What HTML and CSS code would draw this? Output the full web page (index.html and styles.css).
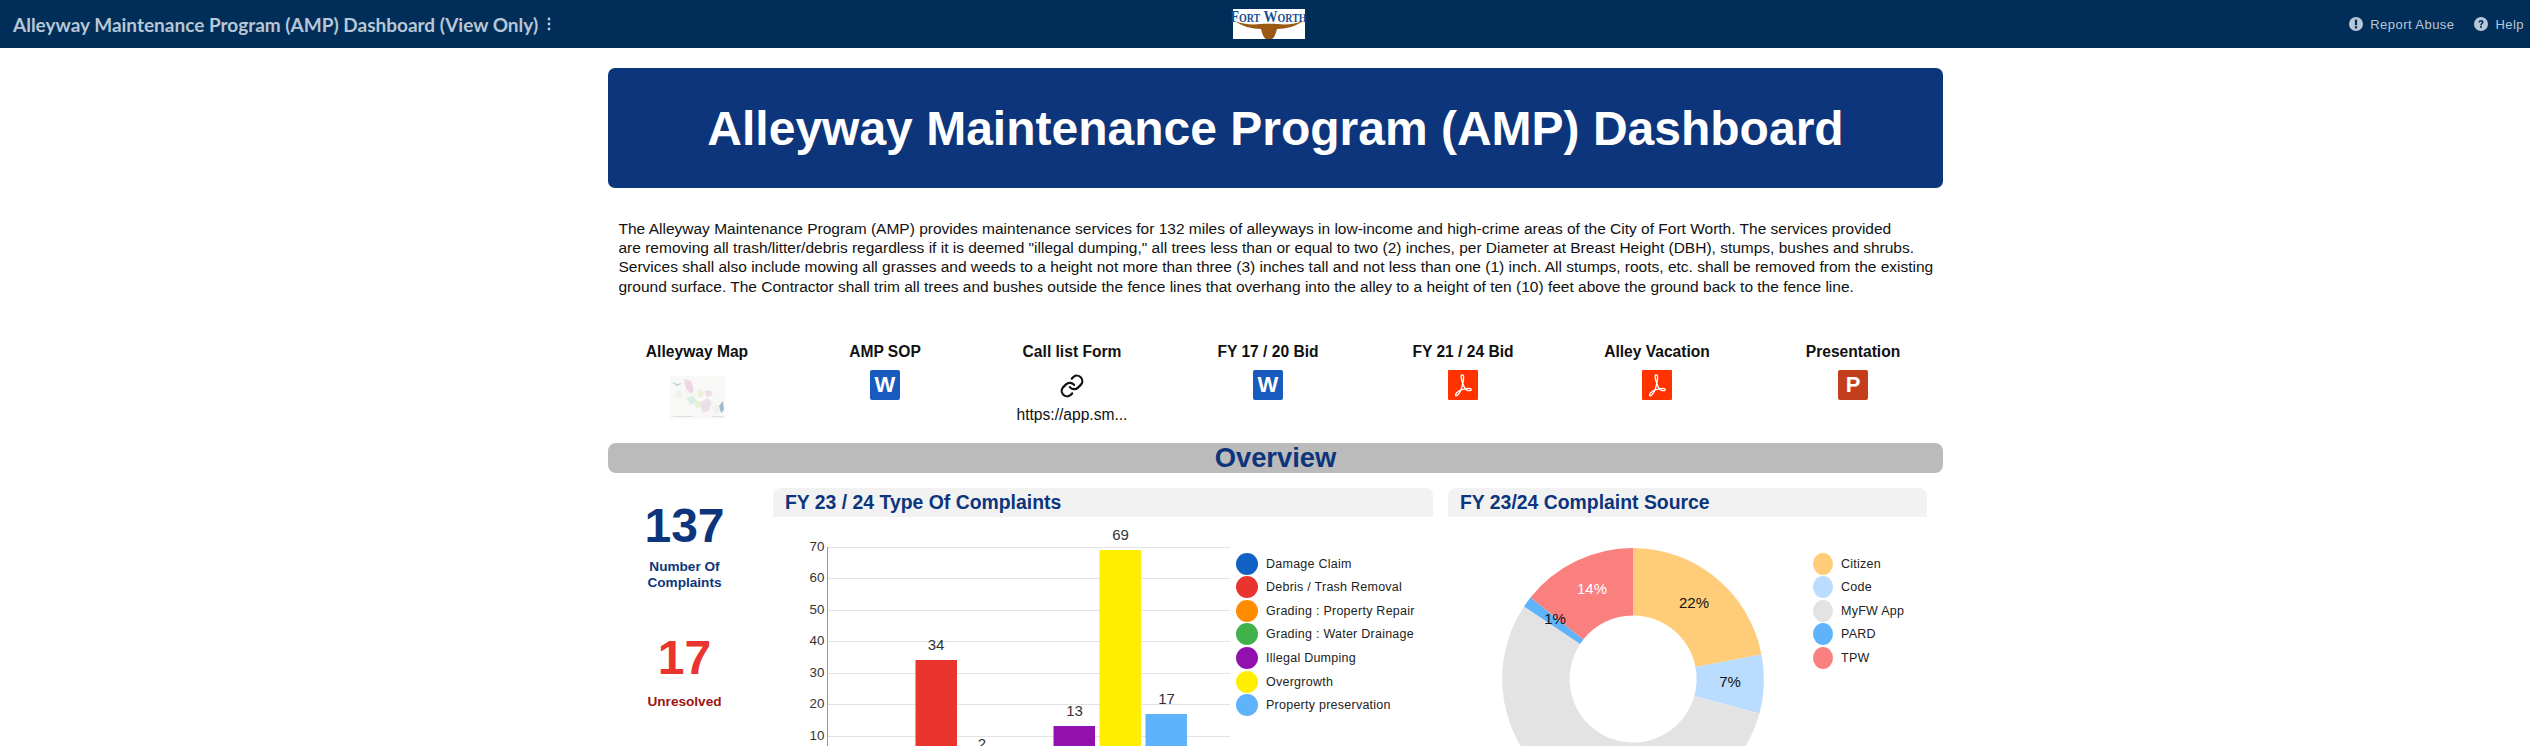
FILE: index.html
```html
<!DOCTYPE html>
<html lang="en">
<head>
<meta charset="utf-8">
<title>Alleyway Maintenance Program (AMP) Dashboard</title>
<link rel="stylesheet" href="styles.css">
</head>
<body>
<header class="topbar">
  <div class="topbar-title"><span>Alleyway Maintenance Program (AMP) Dashboard (View Only)</span>
    <svg class="kebab" width="4" height="14" viewBox="0 0 4 14"><circle cx="2" cy="2" r="1.4"/><circle cx="2" cy="7" r="1.4"/><circle cx="2" cy="12" r="1.4"/></svg>
  </div>
  <div class="logo">
    <span class="logo-text">Fort Worth</span>
    <svg class="logo-horns" width="70" height="18" viewBox="0 0 70 18"><path d="M1 0C8 3 18 4 26 3C29 2.500 41 2.500 44 3C52 4 62 3 69 0C63 5 52 8 43 8C42 12 40 18 37.500 18H32.500C30 18 28 12 27 8C18 8 7 5 1 0Z"/></svg>
  </div>
  <nav class="topbar-links">
    <span class="toplink"><svg width="14" height="14" viewBox="0 0 14 14"><circle cx="7" cy="7" r="7" class="ico-bg"/><rect x="5.900" y="2.600" width="2.200" height="5.600" class="ico-fg"/><rect x="5.900" y="9.200" width="2.200" height="2.200" class="ico-fg"/></svg>Report Abuse</span>
    <span class="toplink"><svg width="14" height="14" viewBox="0 0 14 14"><circle cx="7" cy="7" r="7" class="ico-bg"/><path d="M4.600 5.400C4.700 3.900 5.800 3.100 7.100 3.100C8.500 3.100 9.500 4 9.500 5.200C9.500 6.800 7.700 6.900 7.700 8.400H6.200C6.200 6.400 7.900 6.200 7.900 5.300C7.900 4.800 7.600 4.500 7 4.500C6.500 4.500 6.100 4.900 6.100 5.400Z" class="ico-fg"/><rect x="6.100" y="9.200" width="1.700" height="1.800" class="ico-fg"/></svg>Help</span>
  </nav>
</header>

<main class="page">
  <h1 class="banner">Alleyway Maintenance Program (AMP) Dashboard</h1>

  <p class="intro">The Alleyway Maintenance Program (AMP) provides maintenance services for 132 miles of alleyways in low-income and high-crime areas of the City of Fort Worth. The services provided<br>are removing all trash/litter/debris regardless if it is deemed "illegal dumping," all trees less than or equal to two (2) inches, per Diameter at Breast Height (DBH), stumps, bushes and shrubs.<br>Services shall also include mowing all grasses and weeds to a height not more than three (3) inches tall and not less than one (1) inch. All stumps, roots, etc. shall be removed from the existing<br>ground surface. The Contractor shall trim all trees and bushes outside the fence lines that overhang into the alley to a height of ten (10) feet above the ground back to the fence line.</p>

  <section class="links">
    <div class="link-item">
      <div class="link-label">Alleyway Map</div>
      <svg class="thumb" width="55" height="43" viewBox="0 0 55 43">
        <rect width="55" height="43" fill="#f8f8f6"/>
        <path d="M14 3l7 2 3 9-3 4-5-5z" fill="#eed6e6"/>
        <path d="M30 27l7-5 5 4-3 9-7 1z" fill="#ecdfea"/>
        <path d="M34 15l6-1 3 5-6 2z" fill="#f0dde4"/>
        <path d="M16 22l7-2 4 5-6 4z" fill="#d8efe8"/>
        <path d="M29 13l5 3-2 6-5-2z" fill="#ecf0d8"/>
        <path d="M24 26l6-1 1 6-5 1z" fill="#e6f2d8"/>
        <path d="M6 14l6 2-1 7-6-1z" fill="#f1f1ec"/>
        <path d="M42 31l6-3 2 7-5 3z" fill="#f0f0ec"/>
        <path d="M49 30l4-5 1 9-3 3z" fill="#a3bccb"/>
        <path d="M1 6l7 2 5-1-6 3z" fill="#c0ced6"/>
        <rect x="3" y="40" width="20" height="1" fill="#dedede"/>
        <rect x="42" y="40" width="11" height="1" fill="#dedede"/>
      </svg>
    </div>
    <div class="link-item">
      <div class="link-label">AMP SOP</div>
      <span class="file file-word">W</span>
    </div>
    <div class="link-item">
      <div class="link-label">Call list Form</div>
      <svg class="chain" width="26" height="26" viewBox="0 0 24 24" fill="none" stroke="#111" stroke-width="2" stroke-linecap="round" stroke-linejoin="round"><path d="M10 13a5 5 0 0 0 7.500.5l3-3a5 5 0 0 0-7-7l-1.700 1.700"/><path d="M14 11a5 5 0 0 0-7.500-.5l-3 3a5 5 0 0 0 7 7l1.700-1.700"/></svg>
      <div class="link-url">https://app.sm...</div>
    </div>
    <div class="link-item">
      <div class="link-label">FY 17 / 20 Bid</div>
      <span class="file file-word">W</span>
    </div>
    <div class="link-item">
      <div class="link-label">FY 21 / 24 Bid</div>
      <span class="file file-pdf"><svg width="30" height="30" viewBox="0 0 30 30" fill="none" stroke="#fff" stroke-width="1.300"><path d="M14 5C12.500 5 13 9 15 14C16 17 18 20 20 20.500C22.500 21 24 20 23 19C22 18 17 18.500 13 20C10 21 7 24 7.500 25.500C8 26.500 10.500 25 12.500 21C14 18 16 9 15.500 6C15.300 5.300 14.800 5 14 5Z"/></svg></span>
    </div>
    <div class="link-item">
      <div class="link-label">Alley Vacation</div>
      <span class="file file-pdf"><svg width="30" height="30" viewBox="0 0 30 30" fill="none" stroke="#fff" stroke-width="1.300"><path d="M14 5C12.500 5 13 9 15 14C16 17 18 20 20 20.500C22.500 21 24 20 23 19C22 18 17 18.500 13 20C10 21 7 24 7.500 25.500C8 26.500 10.500 25 12.500 21C14 18 16 9 15.500 6C15.300 5.300 14.800 5 14 5Z"/></svg></span>
    </div>
    <div class="link-item">
      <div class="link-label">Presentation</div>
      <span class="file file-ppt">P</span>
    </div>
  </section>

  <h2 class="section-bar">Overview</h2>

  <section class="overview">
    <div class="metrics">
      <div class="metric">
        <div class="metric-num navy">137</div>
        <div class="metric-cap navy">Number Of<br>Complaints</div>
      </div>
      <div class="metric metric-second">
        <div class="metric-num red">17</div>
        <div class="metric-cap darkred">Unresolved</div>
      </div>
    </div>

    <div class="panel panel-type">
      <h3 class="panel-title">FY 23 / 24 Type Of Complaints</h3>
      <div class="panel-body">
        <svg class="bar-chart" width="460" height="229" viewBox="773 517 460 229">
          <g class="grid">
            <line x1="827" x2="1230" y1="547.500" y2="547.500"/>
            <line x1="827" x2="1230" y1="578.500" y2="578.500"/>
            <line x1="827" x2="1230" y1="610.500" y2="610.500"/>
            <line x1="827" x2="1230" y1="641.500" y2="641.500"/>
            <line x1="827" x2="1230" y1="673.500" y2="673.500"/>
            <line x1="827" x2="1230" y1="704.500" y2="704.500"/>
            <line x1="827" x2="1230" y1="736.500" y2="736.500"/>
          </g>
          <line class="axis" x1="827.500" x2="827.500" y1="547" y2="746"/>
          <g class="ticks">
            <text x="817" y="551">70</text><text x="817" y="582">60</text><text x="817" y="614">50</text><text x="817" y="645">40</text><text x="817" y="677">30</text><text x="817" y="708">20</text><text x="817" y="740">10</text>
          </g>
          <rect x="915.500" y="660" width="41.500" height="86" fill="#ea352e"/>
          <rect x="1053.500" y="726" width="41.500" height="20" fill="#9210ad"/>
          <rect x="1099.500" y="550" width="41.500" height="196" fill="#ffee00"/>
          <rect x="1145.500" y="714" width="41.500" height="32" fill="#5fb3fb"/>
          <g class="values">
            <text x="936" y="650">34</text><text x="982" y="749">2</text><text x="1074.500" y="716">13</text><text x="1120.500" y="540">69</text><text x="1166.500" y="704">17</text>
          </g>
        </svg>
        <ul class="legend">
          <li><i class="dot" style="background:#1061c3"></i>Damage Claim</li>
          <li><i class="dot" style="background:#ea352e"></i>Debris / Trash Removal</li>
          <li><i class="dot" style="background:#ff8c00"></i>Grading : Property Repair</li>
          <li><i class="dot" style="background:#40b14b"></i>Grading : Water Drainage</li>
          <li><i class="dot" style="background:#9210ad"></i>Illegal Dumping</li>
          <li><i class="dot" style="background:#ffee00"></i>Overgrowth</li>
          <li><i class="dot" style="background:#5fb3fb"></i>Property preservation</li>
        </ul>
      </div>
    </div>

    <div class="panel panel-source">
      <h3 class="panel-title">FY 23/24 Complaint Source</h3>
      <div class="panel-body">
        <svg class="donut" width="360" height="229" viewBox="1448 517 360 229">
          <path d="M1633 548A131 131 0 0 1 1761.500 654.500L1695.500 667A63.500 63.500 0 0 0 1633 615.500Z" fill="#ffcc7a"/>
          <path d="M1761.500 654.500A131 131 0 0 1 1759.500 713.500L1694.300 696A63.500 63.500 0 0 0 1695.500 667Z" fill="#b9dcff"/>
          <path d="M1759.500 713.500A131 131 0 1 1 1524 606.500L1580.200 643.900A63.500 63.500 0 1 0 1694.300 696Z" fill="#e3e3e3"/>
          <path d="M1524 606.500A131 131 0 0 1 1530.500 597.500L1583.300 639.500A63.500 63.500 0 0 0 1580.200 643.900Z" fill="#5fb3fb"/>
          <path d="M1530.500 597.500A131 131 0 0 1 1633 548V615.500A63.500 63.500 0 0 0 1583.300 639.500Z" fill="#fa7f7f"/>
          <g class="pct">
            <text x="1694" y="608">22%</text>
            <text x="1730" y="687">7%</text>
            <text x="1555" y="624">1%</text>
            <text x="1592" y="594" class="pct-light">14%</text>
          </g>
        </svg>
        <ul class="legend">
          <li><i class="dot" style="background:#ffcc7a"></i>Citizen</li>
          <li><i class="dot" style="background:#b9dcff"></i>Code</li>
          <li><i class="dot" style="background:#e3e3e3"></i>MyFW App</li>
          <li><i class="dot" style="background:#5fb3fb"></i>PARD</li>
          <li><i class="dot" style="background:#fa7f7f"></i>TPW</li>
        </ul>
      </div>
    </div>
  </section>
</main>
</body>
</html>
```
FILE: styles.css
```css
* { box-sizing: border-box; }
html, body { margin: 0; height: 100%; overflow: hidden; background: #fff; }
body { font-family: "Liberation Sans", Arial, sans-serif; color: #111; }

.topbar { height: 48px; background: #012e58; display: grid; grid-template-columns: 1fr auto 1fr; align-items: center; padding: 0 6px 0 13px; color: #b8c6d6; }
.topbar-title { font-family: Lato, sans-serif; font-weight: 700; font-size: 19px; display: flex; align-items: center; gap: 9px; white-space: nowrap; }
.kebab { fill: #b8c6d6; }
.logo { width: 72px; height: 30px; background: #fff; display: flex; flex-direction: column; align-items: center; }
.logo-text { font-family: "Liberation Serif", serif; font-weight: 700; font-size: 14px; font-variant: small-caps; line-height: 12px; color: #1d4f8f; white-space: nowrap; transform: scaleY(1.25); transform-origin: top; }
.logo-horns { fill: #9b5a13; }
.topbar-links { justify-self: end; display: flex; gap: 20px; font-size: 13px; letter-spacing: .45px; }
.toplink { display: flex; align-items: center; gap: 7px; }
.ico-bg { fill: #b8c6d6; }
.ico-fg { fill: #012e58; }

.page { width: 1335px; margin: 20px 0 0 608px; }
.banner { margin: 0; height: 120px; background: #0d357c; color: #fff; border-radius: 7px; font-size: 48px; font-weight: 700; display: flex; align-items: center; justify-content: center; }
.intro { margin: 31px 0 0; padding-left: 10.5px; font-size: 15.5px; line-height: 19.2px; color: #111; white-space: nowrap; }

.links { margin-top: 47px; margin-left: -5px; height: 97px; display: grid; grid-template-columns: 188px 188px 186px 206px 184px 204px 188px; }
.link-item { display: flex; flex-direction: column; align-items: center; }
.link-label { font-size: 15.6px; font-weight: 700; line-height: 18px; height: 27px; color: #111; white-space: nowrap; }
.file { width: 30px; height: 30px; border-radius: 2px; color: #fff; font-weight: 700; font-size: 22px; display: flex; align-items: center; justify-content: center; }
.file-word { background: #185abd; }
.file-pdf { background: #ff3300; border-radius: 1px; }
.file-ppt { background: #c43e1c; }
.thumb { margin-top: 6px; }
.chain { margin-top: 3px; }
.link-url { font-size: 15.6px; line-height: 18px; margin-top: 7px; white-space: nowrap; }

.section-bar { margin: 3px 0 0; height: 30px; background: #bbb; color: #0d357c; border-radius: 8px; display: flex; align-items: center; justify-content: center; line-height: 1; font-size: 27.33px; font-weight: 700; }

.overview { display: flex; margin-top: 15px; }
.metrics { width: 165px; text-align: center; font-weight: 700; }
.metric { display: flex; flex-direction: column; align-items: center; padding-right: 12px; }
.metric-num { font-size: 48px; line-height: 56px; margin-top: 10px; }
.metric-cap { font-size: 13.6px; line-height: 16px; margin-top: 5px; }
.metric-second { margin-top: 29.5px; }
.metric-second .metric-cap { margin-top: 7.5px; }
.navy { color: #0d357c; }
.red { color: #ea352e; }
.darkred { color: #9c1414; }

.panel-type { width: 660px; margin-right: 15px; }
.panel-source { width: 479px; }
.panel-title { margin: 0; height: 29px; line-height: 29px; padding-left: 12px; background: #f2f2f2; border-radius: 8px 8px 0 0; color: #0d357c; font-size: 19.4px; font-weight: 700; white-space: nowrap; }
.panel-body { display: flex; }
.bar-chart, .donut { flex: none; display: block; }
.grid line { stroke: #e3e3e3; stroke-width: 1; }
.axis { stroke: #999; stroke-width: 1; }
.ticks text { font-size: 13.33px; text-anchor: middle; fill: #333; }
.values text { font-size: 15px; text-anchor: middle; fill: #333; }
.pct text { font-size: 15px; text-anchor: middle; fill: #111; }
.pct .pct-light { fill: #fff; }
.legend { list-style: none; margin: 35px 0 0; padding: 0 0 0 3px; font-size: 12.5px; color: #222; }
.legend li { height: 23.6px; display: flex; align-items: center; gap: 8px; white-space: nowrap; letter-spacing: .25px; }
.dot { width: 22px; height: 22px; border-radius: 50%; flex: none; }
.panel-source .legend { padding-left: 5px; }
.panel-source .dot { width: 20px; }
```
